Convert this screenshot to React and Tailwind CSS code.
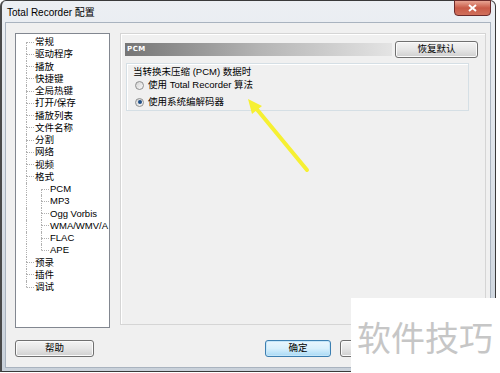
import React from 'react'

const cjk = '"Liberation Sans", "Noto Sans CJK SC", sans-serif'

const items = [
  { t: '常规', lv: 0, first: true },
  { t: '驱动程序', lv: 0 },
  { t: '播放', lv: 0 },
  { t: '快捷键', lv: 0 },
  { t: '全局热键', lv: 0 },
  { t: '打开/保存', lv: 0 },
  { t: '播放列表', lv: 0 },
  { t: '文件名称', lv: 0 },
  { t: '分割', lv: 0 },
  { t: '网络', lv: 0 },
  { t: '视频', lv: 0 },
  { t: '格式', lv: 0 },
  { t: 'PCM', lv: 1, first: true },
  { t: 'MP3', lv: 1 },
  { t: 'Ogg Vorbis', lv: 1 },
  { t: 'WMA/WMV/A', lv: 1 },
  { t: 'FLAC', lv: 1 },
  { t: 'APE', lv: 1, last: true },
  { t: '预录', lv: 0 },
  { t: '插件', lv: 0 },
  { t: '调试', lv: 0, last: true },
]

function Connector({ first, last }) {
  return (
    <span className="flex flex-col w-[8px] self-stretch shrink-0">
      <span className={first ? 'flex-1 border-l border-dotted border-l-transparent' : 'flex-1 border-l border-dotted border-[#b0b0b0]'} />
      <span className={last ? 'flex-1 border-t border-l border-dotted border-[#b0b0b0] border-l-transparent' : 'flex-1 border-t border-l border-dotted border-[#b0b0b0]'} />
    </span>
  )
}

function Tree() {
  return (
    <div className="w-[95px] h-[295px] shrink-0 bg-white border border-[#828790] pl-[10px] pt-[2px] overflow-hidden">
      {items.map((it, i) => (
        <div key={i} className="flex h-[12.25px] items-stretch whitespace-nowrap">
          {it.lv === 1 && <span className="w-[15px] shrink-0 border-l border-dotted border-[#b0b0b0]" />}
          <Connector first={it.first} last={it.last} />
          <span className="pl-[1px] text-[9.5px] leading-[12.25px] text-black">{it.t}</span>
        </div>
      ))}
    </div>
  )
}

function Btn({ children, w, primary }) {
  return (
    <div
      className={
        primary
          ? 'h-[17px] shrink-0 rounded-[3px] border border-[#3c7fb1] bg-gradient-to-b from-[#eaf6fd] via-[#d9f0fc] to-[#a7d9f5] flex items-center justify-center text-[9.5px] text-black shadow-[inset_0_0_0_1px_#c6e6f8]'
          : 'h-[17px] shrink-0 rounded-[3px] border border-[#707070] bg-gradient-to-b from-[#f4f4f4] via-[#e6e6e6] to-[#cfcfcf] flex items-center justify-center text-[9.5px] text-black shadow-[inset_0_0_0_1px_#fbfbfb]'
      }
      style={{ width: w }}
    >
      {children}
    </div>
  )
}

function Radio({ checked, children }) {
  return (
    <div className="flex items-center gap-[4px] h-[14px] pl-[2px]">
      <span className="w-[9px] h-[9px] rounded-full border border-[#8e8f8f] bg-gradient-to-br from-[#d4d4d4] to-[#f8f8f8] flex items-center justify-center">
        {checked && <span className="w-[4px] h-[4px] rounded-full bg-[#1f4f86]" />}
      </span>
      <span className="text-[9.5px] text-black whitespace-nowrap">{children}</span>
    </div>
  )
}

export default function App() {
  return (
    <div className="relative w-[500px] h-[373px] bg-white overflow-hidden" style={{ fontFamily: cjk }}>
      <div className="w-[496px] h-[372px] flex flex-col rounded-t-[6px] border border-[#3a3a3a] border-l-[2px] border-l-[#4a4a4a] bg-gradient-to-b from-[#eceff3] via-[#dbe1e8] to-[#c9d1da] pl-[3px] pr-[4px] pb-[3px]">
        <div className="h-[21px] shrink-0 flex items-start justify-between">
          <span className="pl-[2px] pt-[4px] text-[10px] text-black">Total Recorder 配置</span>
          <div className="w-[37px] h-[16px] -mt-[1px] rounded-b-[4px] border border-[#6b2b2b] bg-gradient-to-b from-[#e8a493] via-[#c85a47] to-[#d0705c] flex items-center justify-center">
            <svg width="9" height="8" viewBox="0 0 9 8">
              <path d="M1 1 L8 7 M8 1 L1 7" stroke="#fff" strokeWidth="2" />
            </svg>
          </div>
        </div>
        <div className="flex-1 flex flex-col bg-[#f0f0f0] border border-[#a9b3bf] pl-[9px] pr-[4px] pt-[10px]">
          <div className="flex gap-[10px]">
            <Tree />
            <div className="w-[366px] h-[292px] border border-[#d5d5d5] shadow-[inset_1px_1px_0_#ffffff] pl-[4px] pr-[7px] pt-[7px]">
              <div className="flex items-center gap-[3px]">
                <div className="flex-1 h-[13px] bg-gradient-to-r from-[#767676] via-[#b4b4b4] to-[#e4e4e4] flex items-center pl-[2px]">
                  <span className="text-[7px] font-bold text-white leading-none tracking-[0.5px]" style={{ fontFamily: '"DejaVu Sans", sans-serif' }}>PCM</span>
                </div>
                <Btn w={83}>恢复默认</Btn>
              </div>
              <div className="mt-[5px] mr-[9px] ml-[1px] border border-[#d5dfe5] shadow-[inset_1px_1px_0_#ffffff] pl-[6px] pt-[2px] pb-[1px]">
                <div className="h-[12px] text-[9.5px] leading-[12px] text-black">当转换未压缩 (PCM) 数据时</div>
                <Radio>使用 Total Recorder 算法</Radio>
                <div className="mt-[3px]">
                  <Radio checked>使用系统编解码器</Radio>
                </div>
              </div>
            </div>
          </div>
          <div className="mt-[12px] flex items-center justify-between pr-[5px]">
            <Btn w={79}>帮助</Btn>
            <div className="flex gap-[9px]">
              <Btn w={66} primary>确定</Btn>
              <Btn w={66} />
              <Btn w={66} />
            </div>
          </div>
        </div>
      </div>

      <svg className="absolute left-0 top-0 pointer-events-none" width="500" height="373">
        <line x1="307" y1="170" x2="255" y2="107" stroke="#f6f032" strokeWidth="4" strokeLinecap="round" />
        <polygon points="248,99 262,106 252,114" fill="#f6f032" />
      </svg>

      <div className="absolute left-[351px] top-[298px] w-[149px] h-[75px] bg-white flex items-start pl-[6px] pt-[19px]">
        <span className="text-[34px] leading-[40px] text-[#c6c6c6]" style={{ fontFamily: '"Noto Sans CJK SC", sans-serif' }}>软件技巧</span>
      </div>
    </div>
  )
}
